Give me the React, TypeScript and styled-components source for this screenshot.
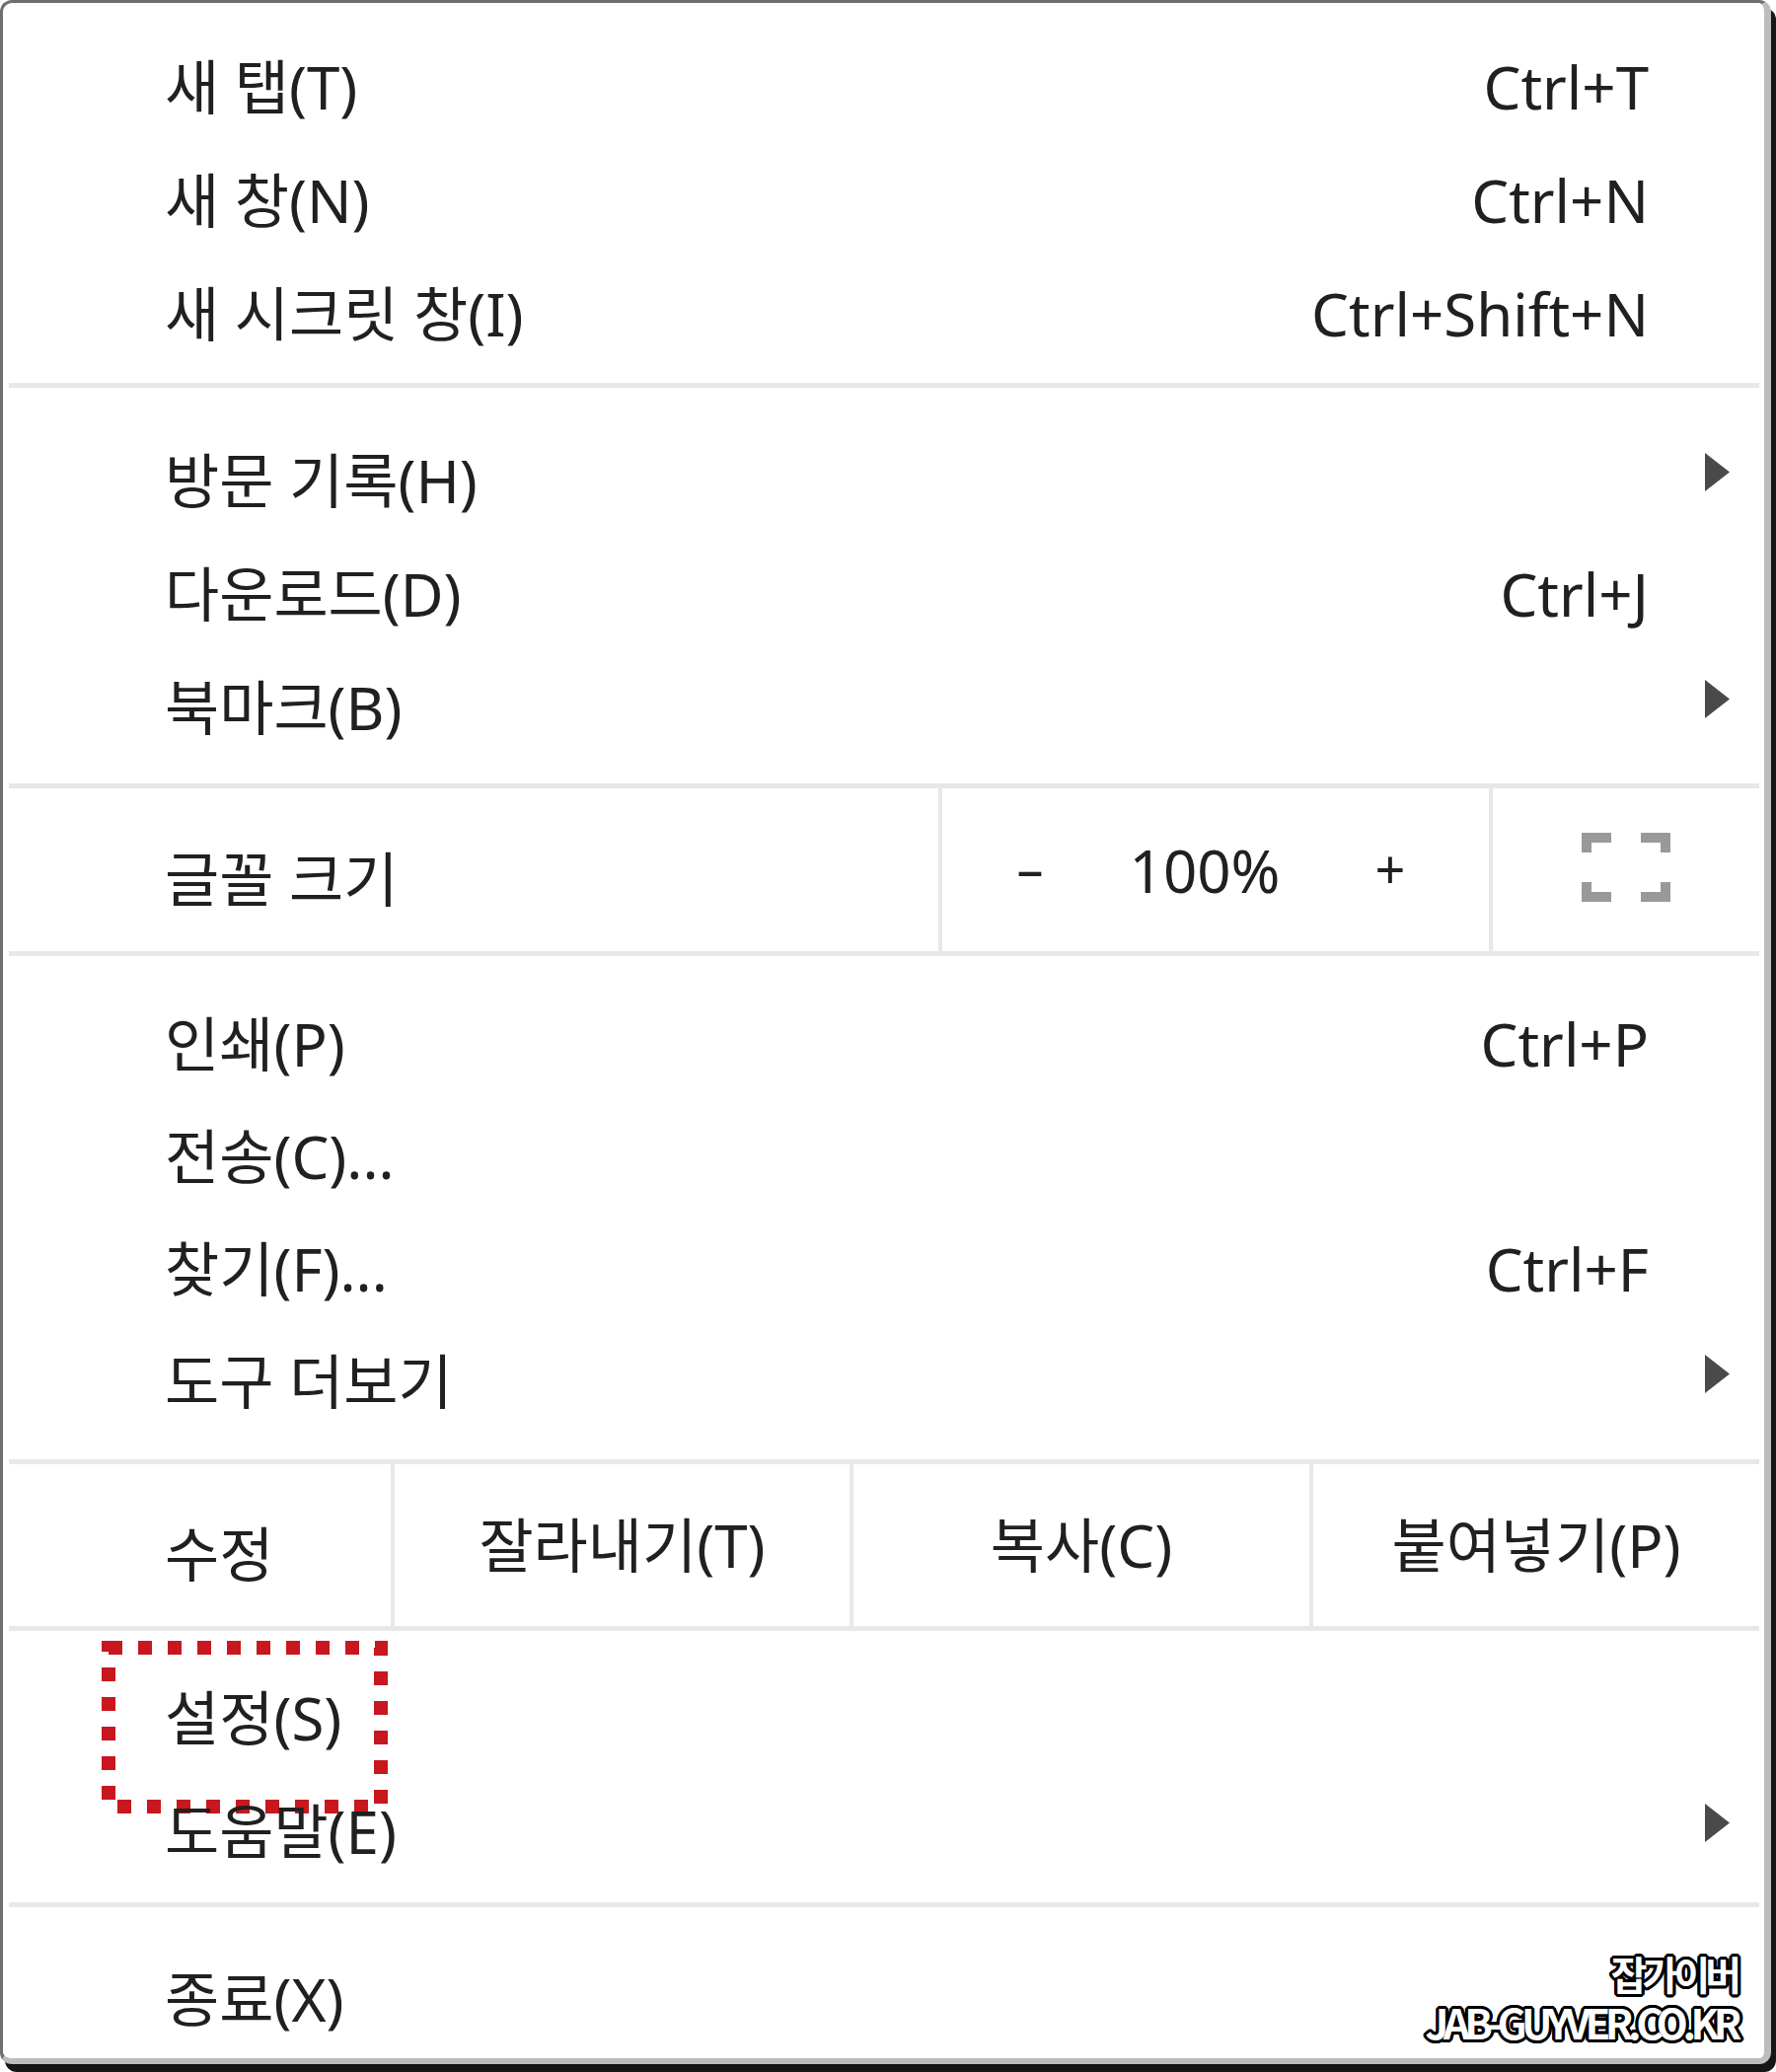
import styled, { createGlobalStyle } from 'styled-components'

type Item = {
  label: string
  shortcut?: string
  submenu?: boolean
  marked?: boolean
}

type Group = {
  top: number
  bottom: number
  rowHeight: number
  items: Item[]
}

const GlobalStyle = createGlobalStyle`
  html, body {
    margin: 0;
    padding: 0;
    background: #ffffff;
  }
  body {
    font-family: "Noto Sans", "Noto Sans CJK KR", sans-serif;
    color: #202020;
  }
`

const groups: Record<string, Group> = {
  windows: {
    top: 27,
    bottom: 13,
    rowHeight: 115,
    items: [
      { label: '새 탭(T)', shortcut: 'Ctrl+T' },
      { label: '새 창(N)', shortcut: 'Ctrl+N' },
      { label: '새 시크릿 창(I)', shortcut: 'Ctrl+Shift+N' },
    ],
  },
  browse: {
    top: 36,
    bottom: 20,
    rowHeight: 115,
    items: [
      { label: '방문 기록(H)', submenu: true },
      { label: '다운로드(D)', shortcut: 'Ctrl+J' },
      { label: '북마크(B)', submenu: true },
    ],
  },
  tools: {
    top: 32,
    bottom: 22,
    rowHeight: 114,
    items: [
      { label: '인쇄(P)', shortcut: 'Ctrl+P' },
      { label: '전송(C)...' },
      { label: '찾기(F)...', shortcut: 'Ctrl+F' },
      { label: '도구 더보기', submenu: true },
    ],
  },
  settings: {
    top: 30,
    bottom: 15,
    rowHeight: 115,
    items: [
      { label: '설정(S)', marked: true },
      { label: '도움말(E)', submenu: true },
    ],
  },
  exit: {
    top: 35,
    bottom: 3,
    rowHeight: 115,
    items: [{ label: '종료(X)' }],
  },
}

function SubmenuArrow() {
  return (
    <svg width="25" height="39" viewBox="0 0 25 39">
      <polygon points="0,0 25,19.5 0,39" fill="#4a4a4a" />
    </svg>
  )
}

function FullscreenIcon() {
  return (
    <svg width="90" height="70" viewBox="0 0 90 70">
      <g fill="#999999">
        <path d="M0 0 H30 V10 H10 V20 H0 Z" />
        <path d="M90 0 H60 V10 H80 V20 H90 Z" />
        <path d="M0 70 H30 V60 H10 V50 H0 Z" />
        <path d="M90 70 H60 V60 H80 V50 H90 Z" />
      </g>
    </svg>
  )
}

function DottedMark() {
  return (
    <Mark>
      <svg width="290" height="175" viewBox="0 0 290 175">
        <rect
          x="7"
          y="7"
          width="276"
          height="161"
          fill="none"
          stroke="#c8171e"
          strokeWidth="14"
          strokeDasharray="14 16"
        />
      </svg>
    </Mark>
  )
}

function MenuGroup({ group }: { group: Group }) {
  return (
    <GroupBox $top={group.top} $bottom={group.bottom}>
      {group.items.map((item) => (
        <Row key={item.label} $height={group.rowHeight}>
          {item.marked && <DottedMark />}
          <Label>{item.label}</Label>
          {item.shortcut && <Shortcut>{item.shortcut}</Shortcut>}
          <ArrowSlot>{item.submenu && <SubmenuArrow />}</ArrowSlot>
        </Row>
      ))}
    </GroupBox>
  )
}

export default function App() {
  return (
    <Screen>
      <GlobalStyle />
      <Card>
        <MenuGroup group={groups.windows} />
        <Separator />
        <MenuGroup group={groups.browse} />
        <Separator />
        <SplitRow $height={165}>
          <SplitLabel $width={948}>글꼴 크기</SplitLabel>
          <Divider />
          <ZoomCell>
            <ZoomButton $width={178}>–</ZoomButton>
            <ZoomValue>100%</ZoomValue>
            <ZoomButton $width={200}>+</ZoomButton>
          </ZoomCell>
          <Divider />
          <IconCell>
            <FullscreenIcon />
          </IconCell>
        </SplitRow>
        <Separator />
        <MenuGroup group={groups.tools} />
        <Separator />
        <SplitRow $height={164}>
          <SplitLabel $width={393}>수정</SplitLabel>
          <Divider />
          <EditButton $width={461}>잘라내기(T)</EditButton>
          <Divider />
          <EditButton $width={462}>복사(C)</EditButton>
          <Divider />
          <EditButton>붙여넣기(P)</EditButton>
        </SplitRow>
        <Separator />
        <MenuGroup group={groups.settings} />
        <Separator />
        <MenuGroup group={groups.exit} />
        <Watermark>
          <WatermarkLine $size={40} $spacing={-5}>잡가이버</WatermarkLine>
          <WatermarkLine $size={42} $spacing={-5.5}>JAB-GUYVER.CO.KR</WatermarkLine>
        </Watermark>
      </Card>
    </Screen>
  )
}

const Screen = styled.div`
  background: #ffffff;
  box-sizing: border-box;
  height: 2100px;
  padding: 0 5px 8px 0;
  width: 1800px;
`

const Card = styled.div`
  background: #ffffff;
  border-color: #6f6f6f #bdbdbd #bdbdbd #6f6f6f;
  border-radius: 12px;
  border-style: solid;
  border-width: 3px 7px 6px 3px;
  box-shadow: 5px 8px 0 #161616;
  box-sizing: border-box;
  display: flex;
  flex-direction: column;
  height: 2092px;
  position: relative;
  width: 1795px;
`

const GroupBox = styled.div<{ $top: number; $bottom: number }>`
  display: flex;
  flex-direction: column;
  padding: ${({ $top, $bottom }) => `${$top}px 0 ${$bottom}px`};
`

const Row = styled.div<{ $height: number }>`
  align-items: center;
  display: flex;
  font-size: 60px;
  height: ${({ $height }) => `${$height}px`};
  line-height: 1;
  padding-left: 164px;
  position: relative;
  white-space: nowrap;
`

const Label = styled.span`
  margin-right: auto;
`

const Shortcut = styled.span`
  text-align: right;
`

const ArrowSlot = styled.span`
  box-sizing: border-box;
  display: flex;
  justify-content: flex-end;
  padding: 0 35px 16px 0;
  width: 117px;
`

const Separator = styled.div`
  background: #e8e8e8;
  flex-shrink: 0;
  height: 5px;
  margin: 0 5px 0 6px;
`

const SplitRow = styled.div<{ $height: number }>`
  display: flex;
  font-size: 60px;
  height: ${({ $height }) => `${$height}px`};
  line-height: 1;
  margin-right: 5px;
  white-space: nowrap;
`

const SplitLabel = styled.div<{ $width: number }>`
  align-items: center;
  box-sizing: border-box;
  display: flex;
  padding: 18px 0 0 164px;
  width: ${({ $width }) => `${$width}px`};
`

const Divider = styled.div`
  background: #e8e8e8;
  flex-shrink: 0;
  width: 4px;
`

const ZoomCell = styled.div`
  align-items: center;
  display: flex;
  width: 554px;
`

const ZoomButton = styled.div<{ $width: number }>`
  font-size: 54px;
  padding-bottom: 4px;
  text-align: center;
  width: ${({ $width }) => `${$width}px`};
`

const ZoomValue = styled.div`
  flex: 1;
  text-align: center;
`

const IconCell = styled.div`
  align-items: center;
  display: flex;
  flex: 1;
  justify-content: center;
  padding-bottom: 6px;
`

const EditButton = styled.div<{ $width?: number }>`
  align-items: center;
  display: flex;
  flex: ${({ $width }) => ($width ? `0 0 ${$width}px` : '1')};
  justify-content: center;
`

const Mark = styled.div`
  height: 175px;
  left: 100px;
  position: absolute;
  top: -20px;
  width: 290px;

  svg {
    display: block;
  }
`

const Watermark = styled.div`
  align-items: flex-end;
  bottom: 16px;
  display: flex;
  flex-direction: column;
  font-family: "Noto Sans CJK KR", "Noto Sans", sans-serif;
  font-weight: 700;
  gap: 8px;
  position: absolute;
  right: 28px;
`

const WatermarkLine = styled.div<{ $size: number; $spacing: number }>`
  color: #ffffff;
  font-size: ${({ $size }) => `${$size}px`};
  letter-spacing: ${({ $spacing }) => `${$spacing}px`};
  line-height: 1;
  text-shadow:
    3px 0 #000, -3px 0 #000, 0 3px #000, 0 -3px #000,
    2px 2px #000, -2px 2px #000, 2px -2px #000, -2px -2px #000,
    3px 1px #000, -3px 1px #000, 3px -1px #000, -3px -1px #000,
    1px 3px #000, -1px 3px #000, 1px -3px #000, -1px -3px #000;
`
